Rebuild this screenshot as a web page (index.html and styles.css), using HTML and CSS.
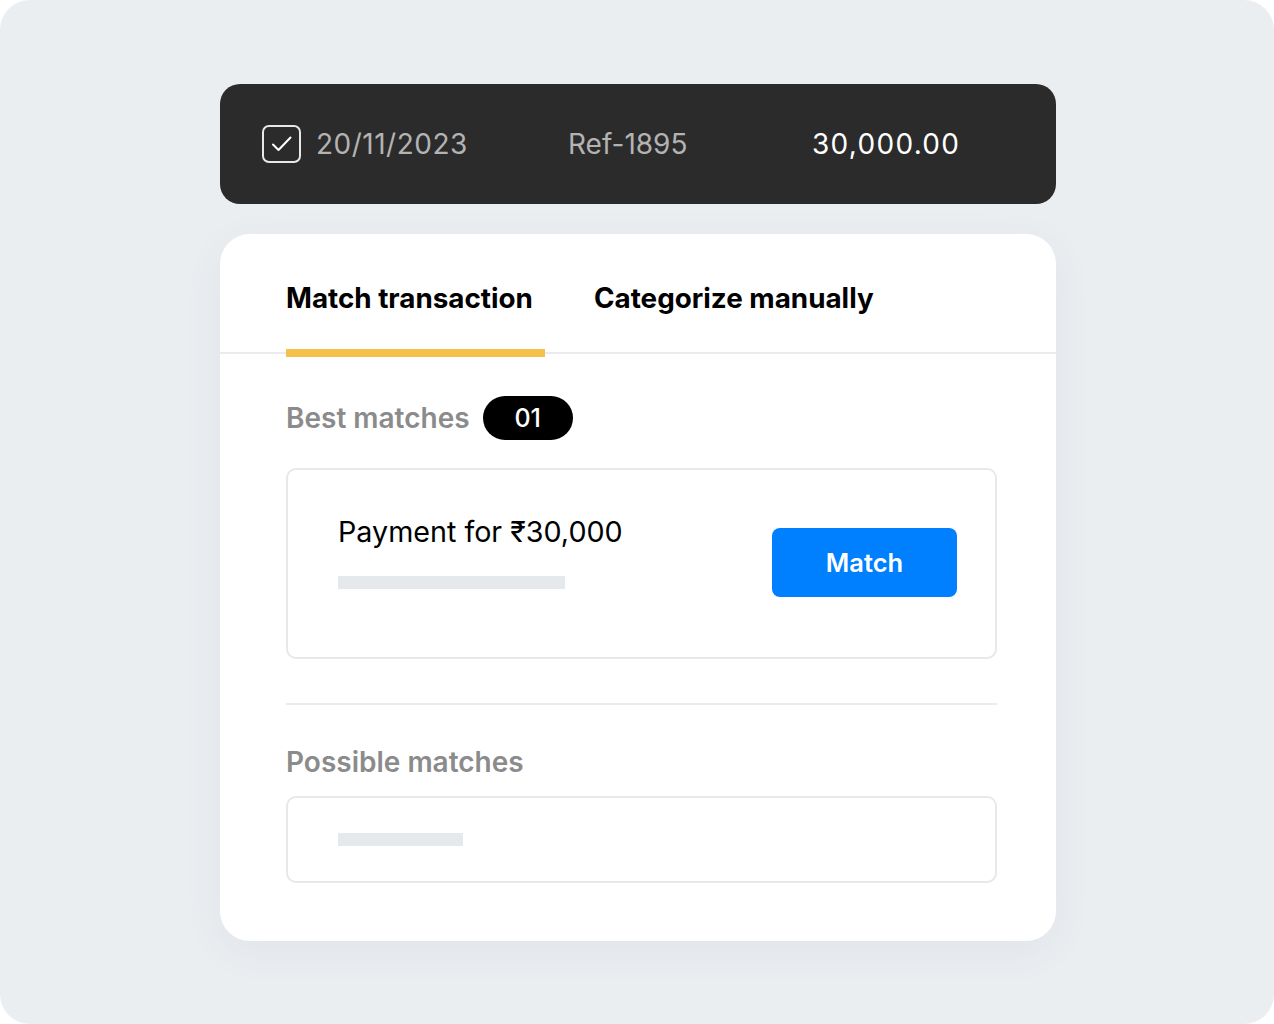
FILE: index.html
```html
<!doctype html>
<html lang="en">
<head>
    <meta charset="UTF-8">
    <title>Match transaction</title>
    <link rel="stylesheet" href="styles.css">
</head>
<body>

<div class="frame">
    <!-- statement row -->
    <div class="txn_bar">
        <span class="txn_check">
            <svg width="26" height="26" viewBox="0 0 26 26">
                <path d="M4 13.5 L9.5 19 L21.5 6.5" fill="none" stroke="#fff" stroke-width="2" stroke-linecap="round" stroke-linejoin="round"/>
            </svg>
        </span>
        <span class="txn_date">20/11/2023</span>
        <span class="txn_ref">Ref-1895</span>
        <span class="txn_amount">30,000.00</span>
    </div>

    <div class="card">
        <div class="tabs">
            <div class="tab active">Match transaction</div>
            <div class="tab">Categorize manually</div>
        </div>

        <div class="card_body">
            <div class="section_title">
                Best matches
                <span class="count">01</span>
            </div>

            <div class="match_box">
                <div class="match_info">
                    <div class="match_name">Payment for ₹30,000</div>
                    <div class="skeleton wide"></div>
                </div>
                <button class="match_btn">Match</button>
            </div>

            <hr class="divider">

            <div class="section_title">Possible matches</div>

            <div class="possible_box">
                <div class="skeleton short"></div>
            </div>
        </div>
    </div>
</div>

</body>
</html>
```

FILE: styles.css
```css
* {
    box-sizing: border-box;
}

body {
    margin: 0;
    background: #fff;
    font-family: Inter, "Noto Sans", sans-serif;
}

.frame {
    width: 1274px;
    height: 1024px;
    background: #ebeef1;
    border-radius: 30px;
    padding: 84px 0 0 220px;
}

/* dark row */
.txn_bar {
    width: 836px;
    height: 120px;
    background: #2b2b2b;
    border-radius: 20px;
    display: flex;
    align-items: center;
    padding-left: 42px;
    font-size: 28px;
}
.txn_check {
    width: 39px;
    height: 38px;
    border: 2px solid #e8e8e8;
    border-radius: 7px;
    display: flex;
    align-items: center;
    justify-content: center;
    margin-right: 15px;
}
.txn_date {
    width: 252px;
    color: #b3b3b3;
    letter-spacing: 0.5px;
}
.txn_ref {
    width: 244px;
    color: #b3b3b3;
}
.txn_amount {
    color: #fff;
    letter-spacing: 1.3px;
}

/* card */
.card {
    width: 836px;
    margin-top: 30px;
    background: #fff;
    border-radius: 30px;
    padding-bottom: 58px;
    box-shadow: 0 10px 40px rgba(60, 70, 90, 0.06);
}
.tabs {
    display: flex;
    gap: 49px;
    padding: 0 0 0 66px;
    border-bottom: 2px solid #e9ebee;
    height: 120px;
    align-items: flex-end;
}
.tab {
    font-size: 27.8px;
    font-weight: 700;
    color: #000;
    padding-bottom: 34px;
    margin-bottom: -5px;
    border-bottom: 8px solid transparent;
}
.tab.active {
    width: 259px;
    border-bottom-color: #f6c14b;
}

.card_body {
    padding: 42px 59px 0 66px;
}
.section_title {
    display: flex;
    align-items: center;
    gap: 13px;
    font-size: 28px;
    font-weight: 600;
    color: #8b8b8b;
    height: 44px;
}
.count {
    width: 90px;
    height: 44px;
    border-radius: 22px;
    background: #000;
    color: #fff;
    font-size: 25px;
    font-weight: 500;
    display: flex;
    align-items: center;
    justify-content: center;
}

.match_box {
    margin-top: 28px;
    height: 191px;
    border: 2px solid #e6e8eb;
    border-radius: 10px;
    display: flex;
    align-items: center;
    justify-content: space-between;
    padding: 0 38px 0 50px;
}
.match_info {
    margin-top: -24px;
}
.match_name {
    font-size: 28.7px;
    color: #000;
}
.skeleton {
    height: 13px;
    background: #e6e9ec;
}
.skeleton.wide {
    width: 227px;
    margin-top: 27px;
}
.skeleton.short {
    width: 125px;
}
.match_btn {
    width: 185px;
    height: 69px;
    border: 0;
    border-radius: 8px;
    background: #0080ff;
    color: #fff;
    font-family: inherit;
    font-size: 25.5px;
    font-weight: 600;
    margin-top: -3px;
}

.divider {
    border: 0;
    height: 2px;
    background: #e9ebee;
    margin: 44px 0 35px;
}

.possible_box {
    margin-top: 12px;
    height: 87px;
    border: 2px solid #e6e8eb;
    border-radius: 10px;
    display: flex;
    align-items: center;
    padding-left: 50px;
}
```
